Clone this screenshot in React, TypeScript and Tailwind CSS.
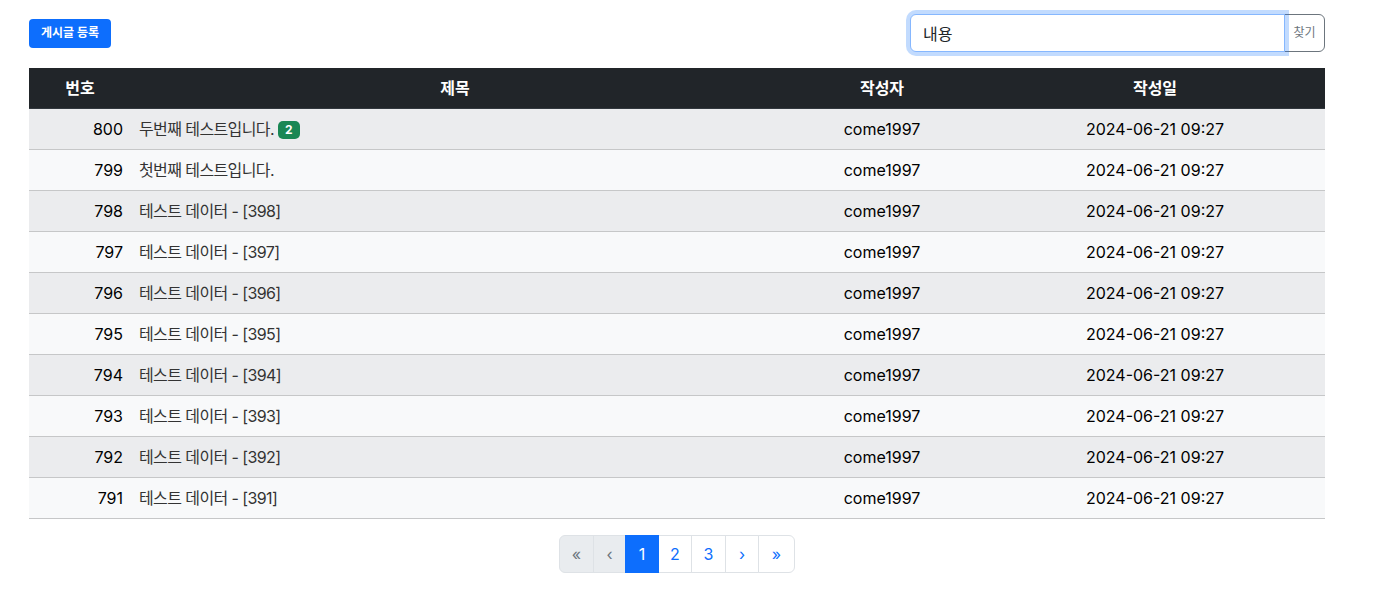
import React from 'react';

interface Post {
  id: number;
  title: string;
  comments?: number;
  writer: string;
  createdAt: string;
}

const posts: Post[] = [
  { id: 800, title: '두번째 테스트입니다.', comments: 2, writer: 'come1997', createdAt: '2024-06-21 09:27' },
  { id: 799, title: '첫번째 테스트입니다.', writer: 'come1997', createdAt: '2024-06-21 09:27' },
  ...[398, 397, 396, 395, 394, 393, 392, 391].map((n, i) => ({
    id: 798 - i,
    title: `테스트 데이터 - [${n}]`,
    writer: 'come1997',
    createdAt: '2024-06-21 09:27',
  })),
];

export default function App() {
  return (
    <div className="min-h-screen bg-white font-['Inter','Noto_Sans_CJK_KR',sans-serif] text-[#212529]">
      <div className="ml-[29px] w-[1296px] pt-[14px]">
        {/* Top bar */}
        <div className="flex items-center justify-between mb-4">
          <button className="h-[29px] px-3 rounded bg-[#0d6efd] text-white text-xs font-bold leading-none">
            게시글 등록
          </button>
          <div className="flex items-stretch">
            <input
              defaultValue="내용"
              className="w-[375px] h-[38px] px-3 text-base text-[#212529] bg-white border border-[#86b7fe] rounded-l-md outline-none shadow-[0_0_0_4px_rgba(13,110,253,0.25)] relative z-10"
            />
            <button className="w-[41px] h-[38px] -ml-px border border-[#6c757d] rounded-r-md text-xs text-[#6c757d] bg-white">
              찾기
            </button>
          </div>
        </div>

        {/* Board table */}
        <table className="w-full border-collapse text-base">
          <colgroup>
            <col className="w-[102px]" />
            <col className="w-[648px]" />
            <col className="w-[206px]" />
            <col className="w-[340px]" />
          </colgroup>
          <thead>
            <tr className="bg-[#212529] text-white border-b border-[#32383e]">
              <th className="py-2 px-2 leading-6 font-bold text-center">번호</th>
              <th className="py-2 px-2 leading-6 font-bold text-center">제목</th>
              <th className="py-2 px-2 leading-6 font-bold text-center">작성자</th>
              <th className="py-2 px-2 leading-6 font-bold text-center">작성일</th>
            </tr>
          </thead>
          <tbody>
            {posts.map((post, i) => (
              <tr
                key={post.id}
                className={`border-b border-[#c6c7c8] ${i % 2 === 0 ? 'bg-[#ebecee]' : 'bg-[#f8f9fa]'}`}
              >
                <td className="py-2 px-2 leading-6 text-right text-black">{post.id}</td>
                <td className="py-2 px-2 leading-6 text-left text-[#333]">
                  <span className="tracking-[-0.6px]">{post.title}</span>
                  {post.comments && (
                    <span className="ml-[4px] inline-block align-[1px] px-[7px] py-[3px] rounded-[5px] bg-[#198754] text-white text-xs font-bold leading-none">
                      {post.comments}
                    </span>
                  )}
                </td>
                <td className="py-2 px-2 leading-6 text-center text-black">{post.writer}</td>
                <td className="py-2 px-2 leading-6 text-center text-black">{post.createdAt}</td>
              </tr>
            ))}
          </tbody>
        </table>

        {/* Pagination */}
        <div className="flex justify-center mt-4">
          <ul className="flex text-base leading-6">
            <li className="w-[35px] h-[38px] flex items-center justify-center border border-[#dee2e6] rounded-l-md bg-[#e9ecef] text-[#6c757d]">«</li>
            <li className="w-[33px] h-[38px] -ml-px flex items-center justify-center border border-[#dee2e6] bg-[#e9ecef] text-[#6c757d]">‹</li>
            <li className="w-[34px] h-[38px] -ml-px flex items-center justify-center border border-[#0d6efd] bg-[#0d6efd] text-white relative z-10">1</li>
            <li className="w-[34px] h-[38px] -ml-px flex items-center justify-center border border-[#dee2e6] bg-white text-[#0d6efd]">2</li>
            <li className="w-[35px] h-[38px] -ml-px flex items-center justify-center border border-[#dee2e6] bg-white text-[#0d6efd]">3</li>
            <li className="w-[34px] h-[38px] -ml-px flex items-center justify-center border border-[#dee2e6] bg-white text-[#0d6efd]">›</li>
            <li className="w-[37px] h-[38px] -ml-px flex items-center justify-center border border-[#dee2e6] rounded-r-md bg-white text-[#0d6efd]">»</li>
          </ul>
        </div>
      </div>
    </div>
  );
}
